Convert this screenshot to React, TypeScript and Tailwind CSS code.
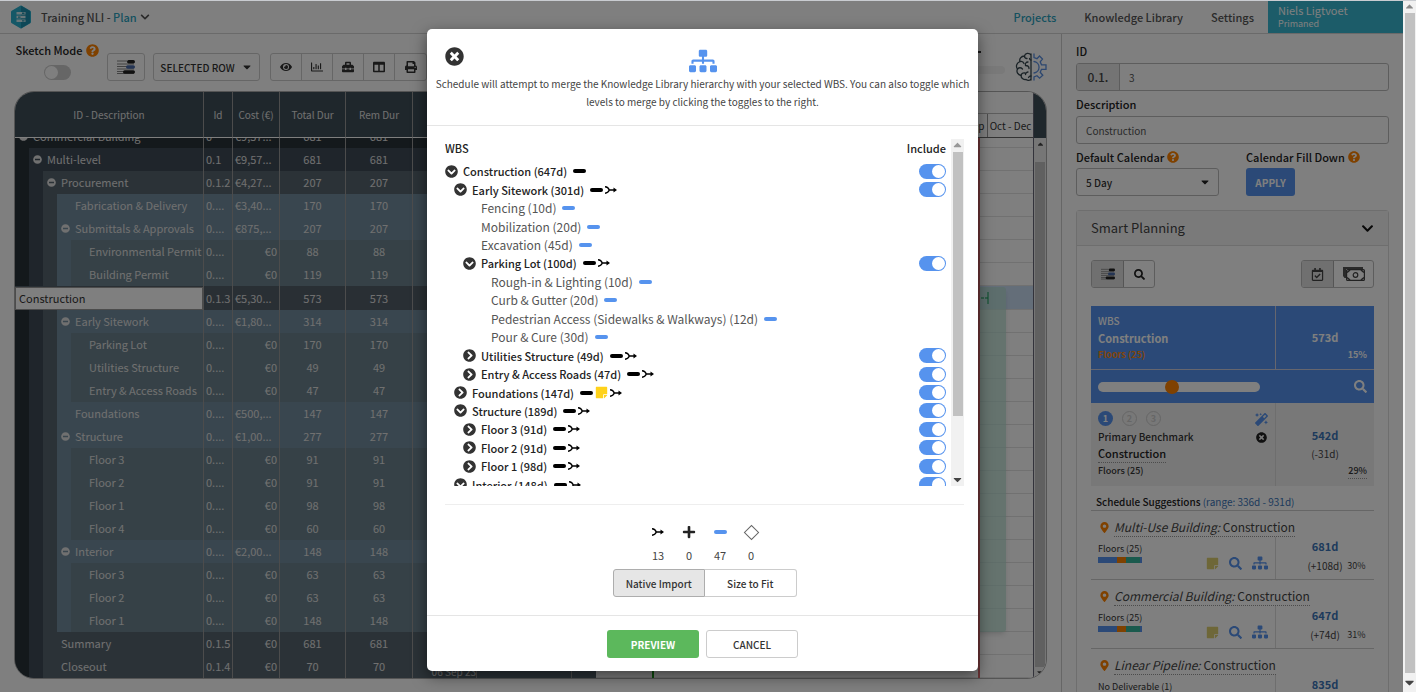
import { useState } from 'react';
import type { ReactNode } from 'react';
import clsx from 'clsx';
import {
  FaCaretDown,
  FaChevronCircleDown,
  FaChevronCircleRight,
  FaChevronDown,
  FaColumns,
  FaEye,
  FaMagic,
  FaMapMarkerAlt,
  FaMinusCircle,
  FaPlus,
  FaPrint,
  FaQuestionCircle,
  FaRegCalendarCheck,
  FaRegChartBar,
  FaSearch,
  FaSitemap,
  FaStickyNote,
  FaTimesCircle,
  FaToolbox,
} from 'react-icons/fa';

type GridRow = {
  name: string;
  level: number;
  id: string;
  cost: string;
  dur: number;
  open?: boolean;
  editing?: boolean;
};

const gridRows: GridRow[] = [
  { name: 'Commercial Building', level: 0, id: '0', cost: '€9,57...', dur: 681, open: true },
  { name: 'Multi-level', level: 1, id: '0.1', cost: '€9,57...', dur: 681, open: true },
  { name: 'Procurement', level: 2, id: '0.1.2', cost: '€4,27...', dur: 207, open: true },
  { name: 'Fabrication & Delivery', level: 3, id: '0....', cost: '€3,40...', dur: 170 },
  { name: 'Submittals & Approvals', level: 3, id: '0....', cost: '€875,...', dur: 207, open: true },
  { name: 'Environmental Permit', level: 4, id: '0....', cost: '€0', dur: 88 },
  { name: 'Building Permit', level: 4, id: '0....', cost: '€0', dur: 119 },
  { name: 'Construction', level: 2, id: '0.1.3', cost: '€5,30...', dur: 573, editing: true },
  { name: 'Early Sitework', level: 3, id: '0....', cost: '€1,80...', dur: 314, open: true },
  { name: 'Parking Lot', level: 4, id: '0....', cost: '€0', dur: 170 },
  { name: 'Utilities Structure', level: 4, id: '0....', cost: '€0', dur: 49 },
  { name: 'Entry & Access Roads', level: 4, id: '0....', cost: '€0', dur: 47 },
  { name: 'Foundations', level: 3, id: '0....', cost: '€500,...', dur: 147 },
  { name: 'Structure', level: 3, id: '0....', cost: '€1,00...', dur: 277, open: true },
  { name: 'Floor 3', level: 4, id: '0....', cost: '€0', dur: 91 },
  { name: 'Floor 2', level: 4, id: '0....', cost: '€0', dur: 91 },
  { name: 'Floor 1', level: 4, id: '0....', cost: '€0', dur: 98 },
  { name: 'Floor 4', level: 4, id: '0....', cost: '€0', dur: 60 },
  { name: 'Interior', level: 3, id: '0....', cost: '€2,00...', dur: 148, open: true },
  { name: 'Floor 3', level: 4, id: '0....', cost: '€0', dur: 63 },
  { name: 'Floor 2', level: 4, id: '0....', cost: '€0', dur: 63 },
  { name: 'Floor 1', level: 4, id: '0....', cost: '€0', dur: 148 },
  { name: 'Summary', level: 2, id: '0.1.5', cost: '€0', dur: 681 },
  { name: 'Closeout', level: 2, id: '0.1.4', cost: '€0', dur: 70 },
];

const levelBg = ['bg-[#283238]', 'bg-[#3e4a57]', 'bg-[#57656f]', 'bg-[#728c9e]', 'bg-[#6c838e]'];

type WbsRow = { name: string; level: number; kind: 'open' | 'closed' | 'leaf'; merge?: boolean; note?: boolean };

const wbsRows: WbsRow[] = [
  { name: 'Construction (647d)', level: 0, kind: 'open' },
  { name: 'Early Sitework (301d)', level: 1, kind: 'open', merge: true },
  { name: 'Fencing (10d)', level: 2, kind: 'leaf' },
  { name: 'Mobilization (20d)', level: 2, kind: 'leaf' },
  { name: 'Excavation (45d)', level: 2, kind: 'leaf' },
  { name: 'Parking Lot (100d)', level: 2, kind: 'open', merge: true },
  { name: 'Rough-in & Lighting (10d)', level: 3, kind: 'leaf' },
  { name: 'Curb & Gutter (20d)', level: 3, kind: 'leaf' },
  { name: 'Pedestrian Access (Sidewalks & Walkways) (12d)', level: 3, kind: 'leaf' },
  { name: 'Pour & Cure (30d)', level: 3, kind: 'leaf' },
  { name: 'Utilities Structure (49d)', level: 2, kind: 'closed', merge: true },
  { name: 'Entry & Access Roads (47d)', level: 2, kind: 'closed', merge: true },
  { name: 'Foundations (147d)', level: 1, kind: 'closed', merge: true, note: true },
  { name: 'Structure (189d)', level: 1, kind: 'open', merge: true },
  { name: 'Floor 3 (91d)', level: 2, kind: 'closed', merge: true },
  { name: 'Floor 2 (91d)', level: 2, kind: 'closed', merge: true },
  { name: 'Floor 1 (98d)', level: 2, kind: 'closed', merge: true },
  { name: 'Interior (148d)', level: 1, kind: 'open', merge: true },
];

const wbsIndent = ['pl-0', 'pl-[9px]', 'pl-[18px]', 'pl-[28px]'];

const suggestions = [
  { group: 'Multi-Use Building:', sub: 'Floors (25)', dur: '681d', diff: '(+108d)', pct: '30%', bar: true },
  { group: 'Commercial Building:', sub: 'Floors (25)', dur: '647d', diff: '(+74d)', pct: '31%', bar: true },
  { group: 'Linear Pipeline:', sub: 'No Deliverable (1)', dur: '835d', diff: '(+262d)', pct: '28%', bar: false },
];

function Logo() {
  return (
    <svg width="22" height="24" viewBox="0 0 22 24" aria-hidden="true">
      <path d="M11 2 L19.5 7 V17 L11 22 L2.500 17 V7 Z" fill="#2bb0cf" stroke="#2bb0cf" strokeWidth="3" strokeLinejoin="round" />
      <path d="M11 .7 L20 6 V18 L11 23.300 Z" fill="#1d8fae" />
      <path d="M6.500 7h9v2.500h-9zM6.500 10.800h9v2.500h-9zM6.500 14.600h9v2.500h-9z" fill="#d5eef4" />
      <path d="M12 7.600h2.500v1.300H12zM8 11.400h2.500v1.300H8zM12 15.200h2.500v1.300H12z" fill="#2795b0" />
    </svg>
  );
}

function GanttIcon({ className }: { className?: string }) {
  return (
    <svg viewBox="0 0 18 14" className={className} aria-hidden="true">
      <path d="M0 1h10M0 4h17M0 6.500h10M0 9h17M0 11.500h8M0 13.500h17" stroke="#666" strokeWidth=".8" />
      <rect x="10" y="0" width="8" height="3.500" rx="1.700" fill="#222" />
      <rect x="9" y="5.200" width="9" height="3.500" rx="1.700" fill="#4a6aa8" />
      <rect x="6" y="10.300" width="12" height="3.500" rx="1.700" fill="#222" />
    </svg>
  );
}

function MergeIcon() {
  return (
    <svg width="12" height="8" viewBox="0 0 12 8" className="shrink-0" aria-hidden="true">
      <path d="M0 .8c2 .2 3.500 1.200 4.300 3.200C3.500 6 2 7 0 7.200M4 4h6" fill="none" stroke="#000" strokeWidth="1.400" />
      <path d="M8.500 1.600 12 4 8.500 6.400z" fill="#000" />
    </svg>
  );
}

function BrainIcon() {
  return (
    <svg width="32" height="30" viewBox="0 0 32 30" fill="none" strokeWidth="1.300" strokeLinecap="round" aria-hidden="true">
      <g stroke="#37474f">
        <path d="M16 2v26M16 3c-2-2.500-6-2-6.500 1C6 4 4 7 5 9.500 1.500 11 .5 14.500 2.500 17 1 20 3 23 6 23.500c0 3 3 4.500 5 4 2 1.500 4 1 5-.5" />
        <path d="M9.500 4c0 1.500 1 2.500 2.500 2.500M5 9.500c2-.5 3.500.5 4 2M13 10c-2 0-3 1.500-2.500 3.500M2.500 17c1.500-1.500 3.500-1.500 5 0M6 23.500c.5-2 2-3 4-2.500M10.500 13.500c2 0 3.500 1 3.500 3M13 20c-1 0-2.500 1-2.500 2.500M16 8c-1 0-1.500-.5-1.500-1.500M16 24c-1 0-2 .5-2.500 1.500" />
      </g>
      <g stroke="#5a8fe0">
        <path d="M19 2v3.500l3 1.200L24.500 4l3 3-2.300 2.800 1.300 3H31v4.500h-4.500l-1.300 3 2.600 2.900-3.200 3-2.600-2.500-3 1.200V28" />
        <path d="M19 9.500a5.800 5.800 0 0 1 0 11.500" />
      </g>
    </svg>
  );
}

function CashIcon() {
  return (
    <svg width="22" height="14" viewBox="0 0 22 14" aria-hidden="true">
      <path d="M0 0h20v2H3v9H1.500L0 9z" fill="#555" />
      <rect x="3.600" y="2.600" width="17.800" height="10.800" rx="1" fill="#fff" stroke="#444" strokeWidth="1.200" />
      <path d="M4 5.500 7 3M21 5.500 18 3M4 10.500 7 13M21 10.500 18 13" stroke="#444" strokeWidth="1.600" />
      <circle cx="12.500" cy="8" r="2.300" fill="none" stroke="#444" strokeWidth="1.200" />
    </svg>
  );
}

function Switch({ label, on }: { label: string; on: boolean }) {
  const [checked, setChecked] = useState(on);
  return (
    <input
      type="checkbox"
      role="switch"
      aria-label={label}
      checked={checked}
      onChange={() => setChecked(!checked)}
      className="flex h-[15px] w-[27px] shrink-0 cursor-pointer appearance-none items-center rounded-full bg-[#ccc] px-px before:size-[13px] before:rounded-full before:bg-white checked:justify-end checked:bg-[#5693ee]"
    />
  );
}

function Dash({ blue }: { blue?: boolean }) {
  return <span className={clsx('h-[4px] w-[13px] shrink-0 rounded-full', blue ? 'bg-[#5693ee]' : 'bg-black')} />;
}

function ToolButton({ label, children }: { label: string; children: ReactNode }) {
  return (
    <button aria-label={label} className="flex w-[31px] items-center justify-center border-r border-[#ccc] text-[12px] text-[#333] last:border-r-0">
      {children}
    </button>
  );
}

function TopBar() {
  return (
    <header className="flex h-[33px] items-center border-b border-[#d5d5d5] bg-white">
      <div className="flex items-center pl-[10px]">
        <Logo />
        <button className="ml-[9px] flex items-center gap-[3px] text-[11px] font-medium text-[#555]">
          <span>
            Training NLI - <span className="text-[#2ba3bf]">Plan</span>
          </span>
          <FaChevronDown className="text-[10px]" />
        </button>
      </div>
      <nav className="ml-auto flex h-full items-center text-[11px] font-medium text-[#555]">
        <a href="#projects" className="mr-[28px] text-[#2ba3bf]">Projects</a>
        <a href="#library" className="mr-[28px]">Knowledge Library</a>
        <a href="#settings" className="mr-[14px]">Settings</a>
        <div className="flex h-full w-[135px] flex-col justify-center bg-[#38b9d2] pl-[10px] font-normal text-white">
          <span className="text-[11px] leading-[14px]">Niels Ligtvoet</span>
          <span className="text-[9px] leading-[14px]">Primaned</span>
        </div>
      </nav>
    </header>
  );
}

function Toolbar() {
  return (
    <div className="flex h-[57px] items-start">
      <div className="flex w-[86px] flex-col items-center pt-[8px]">
        <div className="flex items-center gap-[3px] text-[11px] leading-[16px] font-medium whitespace-nowrap text-[#222]">
          Sketch Mode <FaQuestionCircle className="text-[13px] text-[#ff8200]" />
        </div>
        <div className="mt-[7px]">
          <Switch label="Sketch Mode" on={false} />
        </div>
      </div>
      <button aria-label="Gantt" className="mt-[19px] ml-[7px] flex h-[28px] w-[38px] items-center justify-center rounded-[3px] border border-[#ccc]">
        <GanttIcon className="h-[14px] w-[18px]" />
      </button>
      <button className="mt-[19px] ml-[8px] flex h-[28px] w-[107px] items-center justify-center gap-[6px] rounded-[3px] border border-[#ccc] text-[10px] font-medium text-[#333]">
        SELECTED ROW <FaCaretDown className="text-[12px]" />
      </button>
      <div className="mt-[19px] ml-[10px] flex h-[28px] rounded-[3px] border border-[#ccc]">
        <ToolButton label="View"><FaEye /></ToolButton>
        <ToolButton label="Chart"><FaRegChartBar /></ToolButton>
        <ToolButton label="Tools"><FaToolbox /></ToolButton>
        <ToolButton label="Columns"><FaColumns /></ToolButton>
        <ToolButton label="Print"><FaPrint /></ToolButton>
      </div>
      <div className="mt-[14px] ml-auto flex items-start">
        <div className="mr-[10px] flex w-[60px] flex-col items-start">
          <span className="h-[5px] w-[36px] border-b-2 border-[#333]" />
          <span className="mt-[13px] h-[8px] w-full rounded-full bg-[#f3f3f3]" />
        </div>
        <div className="pt-[4px]">
          <BrainIcon />
        </div>
      </div>
    </div>
  );
}

function TaskRow({ row, first }: { row: GridRow; first: boolean }) {
  const line = first ? 'h-[10px]' : row.editing ? 'h-[24px]' : 'h-[23px]';
  const cell = clsx('flex items-end overflow-hidden', line);
  const text = 'h-[23px] leading-[23px] w-full shrink-0 overflow-hidden whitespace-nowrap';
  return (
    <tr className={row.editing ? 'bg-[#525f69]' : levelBg[row.level]}>
      <td className="p-0">
        {row.editing ? (
          <input
            aria-label="Description"
            defaultValue={row.name}
            className="block h-[23px] w-full border border-[#999] bg-white px-[3px] text-[11px] text-[#333]"
          />
        ) : (
          <div className={cell}>
            {levelBg.slice(0, row.level).map((bg) => (
              <span key={bg} className={clsx('h-[23px] w-[14px] shrink-0', bg)} />
            ))}
            <span className="flex h-[23px] w-[18px] shrink-0 items-center pl-[4px]">
              {row.open && <FaMinusCircle className="text-[9px]" />}
            </span>
            <span className="h-[23px] leading-[23px] whitespace-nowrap">{row.name}</span>
          </div>
        )}
      </td>
      <td className="border-l border-[#999] p-0">
        <div className={cell}><span className={clsx(text, 'pl-[2px]')}>{row.id}</span></div>
      </td>
      <td className="border-l border-[#999] p-0">
        <div className={cell}>
          <span className={clsx(text, row.cost === '€0' ? 'pr-[2px] text-right' : 'pl-[2px]')}>{row.cost}</span>
        </div>
      </td>
      <td className="border-l border-[#999] p-0">
        <div className={cell}><span className={clsx(text, 'text-center')}>{row.dur}</span></div>
      </td>
      <td className="border-l border-[#999] p-0">
        <div className={cell}><span className={clsx(text, 'text-center')}>{row.dur}</span></div>
      </td>
      <td className="border-l border-[#999] p-0 text-right align-bottom text-[10px] leading-[12px]">{row.name === 'Closeout' ? '06 Sep 23' : ''}</td>
      <td className="border-l border-[#999] p-0" />
      <td className="border-l border-[#999] p-0" />
    </tr>
  );
}

function TaskGrid() {
  return (
    <table className="w-[581px] shrink-0 table-fixed border-separate border-spacing-0 text-[11px] text-[#e0e0e0]">
      <colgroup>
        <col className="w-[188px]" />
        <col className="w-[29px]" />
        <col className="w-[47px]" />
        <col className="w-[66px]" />
        <col className="w-[67px]" />
        <col className="w-[64px]" />
        <col className="w-[95px]" />
        <col className="w-[25px]" />
      </colgroup>
      <thead className="bg-[#3e4e58] text-[10px]">
        <tr className="h-[46px]">
          {['ID - Description', 'Id', 'Cost (€)', 'Total Dur', 'Rem Dur', 'Start', 'Finish', ''].map((title, i) => (
            <th key={i} className="border-b border-l border-b-white border-l-[#999] p-0 font-normal whitespace-nowrap first:border-l-0">
              {title}
            </th>
          ))}
        </tr>
      </thead>
      <tbody>
        {gridRows.map((row, i) => (
          <TaskRow key={i} row={row} first={i === 0} />
        ))}
      </tbody>
    </table>
  );
}

function Chart() {
  return (
    <div className="relative min-w-0 flex-1 overflow-hidden bg-white text-[10px] text-[#333]">
      <div className="h-[22px] border-b border-[#bbb]" />
      <div className="flex h-[24px] justify-end border-b border-[#666]">
        {['Jan - Mar', 'Apr - Jun', 'Jul - Sep', 'Oct - Dec'].map((q) => (
          <span key={q} className="w-[46px] shrink-0 border-l border-[#999] text-center leading-[24px] whitespace-nowrap">{q}</span>
        ))}
      </div>
      {gridRows.map((row, i) => (
        <div
          key={i}
          className={clsx(
            'border-b border-[#e2e2e2]',
            i === 0 ? 'h-[10px]' : row.editing ? 'h-[24px] bg-[#c9ddf3]' : 'h-[23px]',
          )}
        />
      ))}
      <div className="absolute top-[195px] right-[27px] h-[345px] w-[360px] rounded-[3px] bg-[#b4dccf]/70 shadow-md" />
      <svg className="absolute top-[200px] right-[44px]" width="12" height="12" aria-hidden="true">
        <path d="M0 6h11" stroke="#0a9a50" strokeDasharray="3 1" />
        <path d="M11 0v12" stroke="#0a9a50" />
      </svg>
      <div className="absolute top-[46px] right-[53px] h-full w-[2px] bg-[#d9696d]" />
      <div className="absolute top-[46px] left-[56px] h-full w-[2px] bg-[#1a9a1a]" />
    </div>
  );
}

function Schedule() {
  return (
    <div className="flex overflow-hidden rounded-[20px] border border-[#aaa]">
      <TaskGrid />
      <Chart />
      <div className="flex w-[13px] shrink-0 flex-col items-center border-l border-[#667] bg-[#ededed]">
        <div className="h-[46px] w-full bg-[#3e4e58]" />
        <span className="flex h-[24px] pt-[2px]"><FaCaretDown className="rotate-180 text-[9px] text-[#444]" /></span>
        <div className="w-[10px] flex-1 bg-[#c1c1c1]" />
        <FaCaretDown className="h-[11px] text-[9px] text-[#444]" />
      </div>
    </div>
  );
}

function Help() {
  return <FaQuestionCircle className="text-[12px] text-[#ff8200]" />;
}

function Benchmark() {
  return (
    <div className="flex h-[83px] bg-[#f0f0f0]">
      <div className="flex w-[185px] justify-between border-r border-[#ddd] pt-[8px] pr-[7px] pl-[7px]">
        <div>
          <div className="flex gap-[9px] text-[9px] font-bold">
            <span className="flex size-[15px] items-center justify-center rounded-full bg-[#5693ee] text-white">1</span>
            <span className="flex size-[15px] items-center justify-center rounded-full border border-[#ccc] text-[#ccc]">2</span>
            <span className="flex size-[15px] items-center justify-center rounded-full border border-[#ccc] text-[#ccc]">3</span>
          </div>
          <div className="mt-[3px] text-[10px] leading-[16px] font-medium text-[#333]">Primary Benchmark</div>
          <a href="#benchmark" className="block w-fit border-b border-dotted border-[#999] text-[11px] leading-[17px] font-medium text-[#222]">
            Construction
          </a>
          <div className="text-[9px] leading-[15px] font-medium text-[#333]">Floors (25)</div>
        </div>
        <div className="flex flex-col items-center gap-[6px] pt-[2px]">
          <FaMagic className="text-[13px] text-[#5693ee]" />
          <button aria-label="Remove benchmark"><FaTimesCircle className="text-[11px] text-[#222]" /></button>
        </div>
      </div>
      <div className="flex flex-1 flex-col items-center pt-[23px]">
        <span className="text-[11px] leading-[18px] font-bold text-[#3a75b8]">542d</span>
        <span className="text-[10px] leading-[19px] text-[#444]">(-31d)</span>
        <span className="mr-[7px] self-end border-b border-dotted border-[#999] text-[9px] leading-[15px] font-medium text-[#333]">29%</span>
      </div>
    </div>
  );
}

function Suggestion({ item }: { item: (typeof suggestions)[number] }) {
  return (
    <article className="border-b border-[#ccc] pt-[6px]">
      <div className="flex h-[20px] items-center gap-[4px] pl-[8px] text-[12px] text-[#444]">
        <FaMapMarkerAlt className="text-[11px] text-[#ff8200]" />
        <a href="#suggestion" className="border-b border-dotted border-[#999] leading-[18px]">
          <i>{item.group}</i> Construction
        </a>
      </div>
      <div className="flex h-[42px]">
        <div className="flex w-[185px] items-end justify-between border-r border-[#ddd] pr-[7px] pb-[8px] pl-[7px]">
          <div className="self-start pt-[4px]">
            <div className="text-[9px] leading-[15px] text-[#333]">{item.sub}</div>
            {item.bar && (
              <div className="mt-[1px] flex h-[6px] w-[44px]">
                <span className="w-[19px] bg-[#5693ee]" />
                <span className="w-[9px] bg-[#ff8200]" />
                <span className="flex-1 bg-[#35b59b]" />
                <span className="w-[2px] bg-[#5693ee]" />
              </div>
            )}
          </div>
          {item.bar && (
            <div className="flex items-center gap-[10px] text-[#5693ee]">
              <FaStickyNote className="text-[13px] text-[#dccf70]" />
              <FaSearch className="text-[13px]" />
              <FaSitemap className="text-[16px]" />
            </div>
          )}
        </div>
        <div className="grid flex-1 grid-cols-[28px_1fr_28px] content-start items-center text-center">
          <span className="col-start-2 text-[11px] leading-[19px] font-bold text-[#3a75b8]">{item.dur}</span>
          <span className="col-start-2 text-[10px] leading-[19px] whitespace-nowrap text-[#444]">{item.diff}</span>
          <span className="pr-[7px] text-[9px] text-[#444]">{item.pct}</span>
        </div>
      </div>
    </article>
  );
}

function SmartPlanning() {
  return (
    <section className="mt-[14px] rounded-[3px] border border-[#ddd]">
      <header className="flex h-[35px] items-center justify-between border-b border-[#ddd] bg-[#f5f5f5] px-[14px] text-[13px] text-[#444]">
        Smart Planning
        <FaChevronDown className="text-[13px] text-[#111]" />
      </header>
      <div className="px-[14px] pt-[14px]">
        <div className="flex justify-between">
          <div className="flex h-[28px] overflow-hidden rounded-[3px] border border-[#bbb]">
            <button aria-label="Gantt" className="flex w-[32px] items-center justify-center border-r border-[#aaa] bg-[#e0e0e0]">
              <GanttIcon className="h-[12px] w-[14px]" />
            </button>
            <button aria-label="Search" className="flex w-[30px] items-center justify-center">
              <FaSearch className="text-[11px] text-[#222]" />
            </button>
          </div>
          <div className="flex h-[28px] overflow-hidden rounded-[3px] border border-[#bbb]">
            <button aria-label="Duration" className="flex w-[32px] items-center justify-center border-r border-[#aaa] bg-[#e0e0e0]">
              <FaRegCalendarCheck className="text-[13px] text-[#444]" />
            </button>
            <button aria-label="Cost" className="flex w-[39px] items-center justify-center">
              <CashIcon />
            </button>
          </div>
        </div>
        <div className="mt-[18px] bg-[#5693ee] text-white">
          <div className="flex h-[64px] border-b border-[#ccd]">
            <div className="w-[185px] border-r border-[#ccd] pt-[7px] pl-[7px] font-medium">
              <div className="text-[10px] leading-[16px]">WBS</div>
              <div className="text-[11px] leading-[18px] font-bold">Construction</div>
              <div className="text-[9px] leading-[15px] font-bold text-[#ff8a10]">Floors (25)</div>
            </div>
            <div className="flex flex-1 flex-col items-center pt-[22px]">
              <span className="text-[11px] leading-[18px] font-bold">573d</span>
              <span className="mr-[7px] self-end text-[9px] leading-[18px] font-bold">15%</span>
            </div>
          </div>
          <div className="flex h-[33px] items-center justify-between px-[7px]">
            <input
              type="range"
              aria-label="Threshold"
              defaultValue={45}
              className="h-[10px] w-[162px] appearance-none rounded-full bg-white [&::-webkit-slider-thumb]:size-[14px] [&::-webkit-slider-thumb]:appearance-none [&::-webkit-slider-thumb]:rounded-full [&::-webkit-slider-thumb]:bg-[#ff8200]"
            />
            <FaSearch className="text-[13px]" />
          </div>
        </div>
        <Benchmark />
        <h3 className="mt-[7px] border-b border-[#ccc] pl-[5px] text-[10px] leading-[17px] font-medium text-[#222]">
          Schedule Suggestions <span className="font-normal text-[#3a75b8]">(range: 336d - 931d)</span>
        </h3>
        {suggestions.map((item) => (
          <Suggestion key={item.group} item={item} />
        ))}
      </div>
    </section>
  );
}

function Sidebar() {
  const label = 'flex items-center gap-[3px] text-[11px] leading-[16px] font-medium text-[#222]';
  return (
    <aside className="w-[342px] shrink-0 border-l border-[#ccc] pt-[9px] pr-[14px] pl-[14px]">
      <label htmlFor="task-id" className={label}>ID</label>
      <div className="mt-[4px] flex h-[28px] overflow-hidden rounded-[3px] border border-[#bbb]">
        <span className="flex w-[43px] items-center justify-center border-r border-[#bbb] bg-[#e8e8e8] text-[12px] font-medium text-[#444]">0.1.</span>
        <input id="task-id" defaultValue="3" className="min-w-0 flex-1 px-[9px] text-[10px] text-[#555]" />
      </div>
      <label htmlFor="task-desc" className={clsx(label, 'mt-[5px]')}>Description</label>
      <input id="task-desc" defaultValue="Construction" className="mt-[4px] block h-[28px] w-full rounded-[3px] border border-[#bbb] px-[9px] text-[10px] text-[#555]" />
      <div className="mt-[5px] flex">
        <div className="w-[170px]">
          <label htmlFor="calendar" className={label}>Default Calendar <Help /></label>
          <div className="relative mt-[3px] w-[143px]">
            <select id="calendar" className="block h-[28px] w-full appearance-none rounded-[3px] border border-[#bbb] bg-transparent px-[9px] text-[10px] font-medium text-[#333]">
              <option>5 Day</option>
            </select>
            <FaCaretDown className="pointer-events-none absolute top-[8px] right-[8px] text-[12px] text-[#222]" />
          </div>
        </div>
        <div>
          <span className={label}>Calendar Fill Down <Help /></span>
          <button className="mt-[3px] h-[28px] w-[49px] rounded-[3px] bg-[#5693ee] text-[10px] font-bold text-white">APPLY</button>
        </div>
      </div>
      <SmartPlanning />
    </aside>
  );
}

function WbsList() {
  return (
    <div className="mt-[13px] flex h-[347px] overflow-hidden">
      <div className="min-w-0 flex-1">
        <div className="flex h-[23px] justify-between pr-[5px] text-[11px] leading-[18px] font-medium text-[#222]">
          <span>WBS</span>
          <span>Include</span>
        </div>
        <ul className="grid h-[332px] auto-rows-fr leading-[18px]">
          {wbsRows.map((row, i) => (
            <li key={i} className={clsx('flex min-h-0 items-center pr-[5px]', wbsIndent[row.level])}>
              <div
                className={clsx(
                  'flex min-w-0 flex-1 items-center',
                  row.kind === 'leaf' ? 'text-[12px] text-[#555]' : 'text-[11px] font-medium text-[#222]',
                )}
              >
                <span className="w-[18px] shrink-0">
                  {row.kind === 'open' && <FaChevronCircleDown className="text-[13px] text-[#333]" />}
                  {row.kind === 'closed' && <FaChevronCircleRight className="text-[13px] text-[#333]" />}
                </span>
                <span className="mr-[6px] whitespace-nowrap">{row.name}</span>
                <Dash blue={row.kind === 'leaf'} />
                {row.note && <FaStickyNote className="ml-[2px] text-[13px] text-[#ffd21a]" />}
                {row.merge && <span className="ml-[2px]"><MergeIcon /></span>}
              </div>
              {row.kind !== 'leaf' && <Switch label={`Include ${row.name}`} on />}
            </li>
          ))}
        </ul>
      </div>
      <div className="flex w-[13px] shrink-0 flex-col items-center bg-[#f1f1f1]">
        <FaCaretDown className="h-[13px] rotate-180 text-[9px] text-[#999]" />
        <div className="h-[264px] w-[10px] bg-[#c1c1c1]" />
        <FaCaretDown className="mt-auto h-[13px] text-[9px] text-[#444]" />
      </div>
    </div>
  );
}

function MergeDialog() {
  const counts = [
    { label: 'Merged', value: 13, icon: <MergeIcon /> },
    { label: 'Added', value: 0, icon: <FaPlus className="text-[14px] text-[#222]" /> },
    { label: 'Tasks', value: 47, icon: <Dash blue /> },
    { label: 'Milestones', value: 0, icon: <span className="size-[11px] rotate-45 border border-[#666]" /> },
  ];
  return (
    <div role="dialog" aria-label="Merge hierarchy" className="w-[551px] rounded-[5px] bg-white shadow-[0_5px_15px_rgba(0,0,0,0.5)]">
      <header className="h-[97px] border-b border-[#e5e5e5] px-[6px] pt-[18px]">
        <div className="grid grid-cols-[1fr_auto_1fr] items-start px-[12px]">
          <button aria-label="Close" className="justify-self-start"><FaTimesCircle className="text-[19px] text-[#333]" /></button>
          <FaSitemap className="text-[28px] text-[#5693ee]" />
        </div>
        <p className="text-center text-[10px] leading-[18px] text-[#444]">
          Schedule will attempt to merge the Knowledge Library hierarchy with your selected WBS. You can also toggle which levels to merge by clicking the toggles to the right.
        </p>
      </header>
      <div className="pr-[14px] pl-[18px]">
        <WbsList />
        <div className="mt-[18px] flex flex-col items-center border-t border-[#eee] pt-[17px]">
          <div className="flex">
            {counts.map((c) => (
              <div key={c.label} title={c.label} className="flex w-[31px] flex-col items-center text-[11px] text-[#444]">
                <span className="flex h-[20px] items-center">{c.icon}</span>
                <span className="mt-[4px] leading-[18px]">{c.value}</span>
              </div>
            ))}
          </div>
          <div className="mt-[5px] flex h-[28px] w-[184px] text-[10px] font-medium text-[#333]">
            <button className="flex-1 rounded-l-[3px] border border-[#adadad] bg-[#e6e6e6]">Native Import</button>
            <button className="flex-1 rounded-r-[3px] border border-l-0 border-[#ccc]">Size to Fit</button>
          </div>
        </div>
      </div>
      <footer className="mt-[18px] flex justify-center gap-[7px] border-t border-[#e5e5e5] pt-[14px] pb-[13px] text-[10px] font-medium">
        <button className="h-[28px] w-[92px] rounded-[3px] bg-[#5cb85c] font-bold text-white">PREVIEW</button>
        <button className="h-[28px] w-[92px] rounded-[3px] border border-[#ccc] text-[#333]">CANCEL</button>
      </footer>
    </div>
  );
}

export default function App() {
  return (
    <div className="flex h-screen overflow-hidden border-t border-[#c9ccd1] bg-white font-['Noto_Sans_CJK_SC',sans-serif]">
      <div className="relative min-w-0 flex-1 overflow-hidden">
        <TopBar />
        <div className="flex h-full">
          <main className="min-w-0 flex-1 pr-[14px] pl-[14px]">
            <Toolbar />
            <Schedule />
          </main>
          <Sidebar />
        </div>
        <div className="absolute inset-0 flex items-start justify-center bg-black/50 pt-[28px] pl-[2px]">
          <MergeDialog />
        </div>
      </div>
      <div className="flex w-[13px] shrink-0 flex-col items-center bg-[#f1f1f1]">
        <FaCaretDown className="h-[12px] rotate-180 text-[9px] text-[#888]" />
        <div className="w-[10px] flex-1 bg-[#c1c1c1]" />
        <FaCaretDown className="h-[19px] text-[9px] text-[#444]" />
      </div>
    </div>
  );
}
